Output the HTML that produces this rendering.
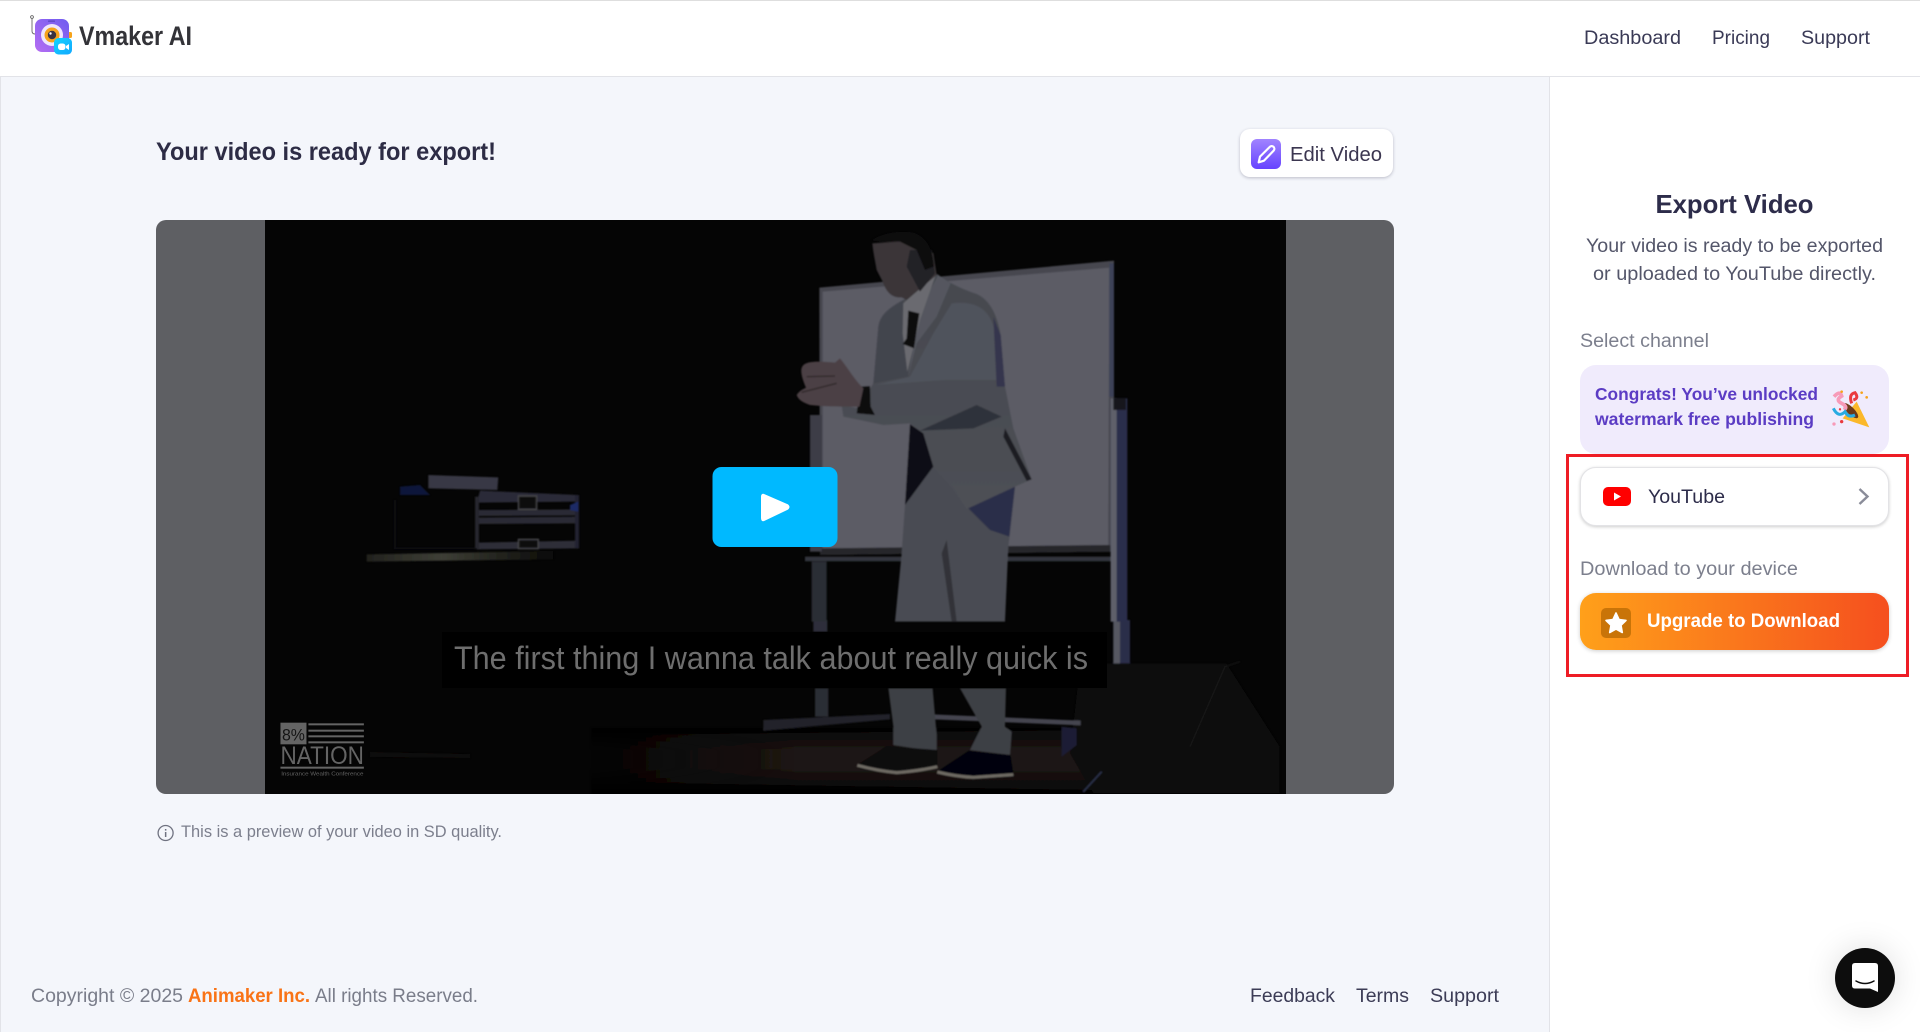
<!DOCTYPE html>
<html lang="en">
<head>
<meta charset="utf-8">
<title>Vmaker AI - Export Video</title>
<style>
html,body{margin:0;padding:0;width:1920px;height:1032px;overflow:hidden;background:#fff;font-family:"Liberation Sans",sans-serif}
.abs{position:absolute;box-sizing:border-box}
#top{left:0;top:0;width:1920px;height:77px;background:#fff;border-top:1px solid #dedede;border-bottom:1px solid #e2e3e8}
#main{left:0;top:77px;width:1549px;height:955px;background:#f4f6fb;border-left:1px solid #e2e3e8}
#side{left:1549px;top:77px;width:371px;height:955px;background:#fff;border-left:1px solid #e2e3e8}
#edit{left:1240px;top:129px;width:153px;height:48px;background:#fff;border-radius:10px;box-shadow:0 1px 3px rgba(40,40,70,.28)}
#video{left:156px;top:220px;width:1238px;height:574px;background:#5e5f63;border-radius:10px;overflow:hidden}
#congrats{left:1580px;top:365px;width:309px;height:89px;background:#f0ebfc;border-radius:16px}
#red{left:1566px;top:454px;width:343px;height:223px;border:3px solid #ee1c25}
#yt{left:1580px;top:467px;width:309px;height:59px;background:#fff;border:1px solid #e3e3e6;border-radius:16px;box-shadow:0 1px 3px rgba(0,0,0,.2)}
#up{left:1580px;top:593px;width:309px;height:57px;border-radius:16px;background:linear-gradient(90deg,#ffa01a,#f54f1e);box-shadow:0 1px 4px rgba(0,0,0,.2)}
#chat{left:1835px;top:948px;width:60px;height:60px;border-radius:50%;background:#0d0d0d;box-shadow:0 0 32px rgba(0,0,0,.13)}
svg{position:absolute;left:0;top:0}
text{font-family:"Liberation Sans",sans-serif}
</style>
</head>
<body>
<div class="abs" id="top"></div>
<div class="abs" id="main"></div>
<div class="abs" id="side"></div>
<div class="abs" id="edit"></div>
<div class="abs" id="video">
<svg width="1238" height="574" viewBox="156 220 1238 574">
<defs>
<linearGradient id="fl" gradientUnits="userSpaceOnUse" x1="591" y1="0" x2="800" y2="0"><stop offset="0" stop-color="#1c1413" stop-opacity="0"/><stop offset="1" stop-color="#1c1413"/></linearGradient>
<linearGradient id="fb" x1="0" y1="0" x2="0" y2="1"><stop offset="0" stop-color="#050505" stop-opacity="0"/><stop offset="1" stop-color="#050505"/></linearGradient>
<linearGradient id="ft" x1="0" y1="0" x2="0" y2="1"><stop offset="0" stop-color="#050505"/><stop offset="1" stop-color="#050505" stop-opacity="0"/></linearGradient>
<linearGradient id="lt" x1="0" y1="0" x2="1" y2="0"><stop offset="0" stop-color="#22221e"/><stop offset=".4" stop-color="#3e3f36"/><stop offset="1" stop-color="#0a0a08"/></linearGradient>
<linearGradient id="jk" x1="0" y1="0" x2="0" y2="1"><stop offset="0" stop-color="#45484f"/><stop offset="1" stop-color="#4d4f54"/></linearGradient>
<filter id="soft"><feGaussianBlur stdDeviation=".8"/></filter>
</defs>
<rect x="265" y="220" width="1021" height="574" fill="#050505"/>
<g filter="url(#soft)">
<!-- floor -->
<polygon points="591,735 1100,730 1095,790 591,782" fill="url(#fl)"/>
<rect x="591" y="728" width="510" height="22" fill="url(#ft)"/>
<rect x="591" y="768" width="510" height="26" fill="url(#fb)"/>
<polygon points="370,752 470,754 470,758 370,757" fill="#0f0a09"/>
<g transform="translate(760 620) scale(.33333)">
<polygon points="960,130 1400,130 1560,380 1560,520 1000,520 930,400" fill="#070707"/>
<path d="M1290 380 L1395 140 L1440 125" stroke="#1a1a1a" stroke-width="3" fill="none"/>
<path d="M970 515 L1025 455" stroke="#2c3048" stroke-width="5"/>
<!-- stand bottoms -->
<rect x="165" y="205" width="40" height="85" fill="#2c2d36"/>
<polygon points="10,300 390,282 390,298 10,332" fill="#22232c"/>
<polygon points="520,283 962,302 962,316 520,298" fill="#44454f"/>
<rect x="1060" y="0" width="50" height="130" fill="#2a2d4a"/>
<rect x="1060" y="0" width="20" height="130" fill="#565862"/>
<rect x="160" y="0" width="42" height="35" fill="#2e2f3a"/>
<polygon points="905,320 950,325 950,375 905,410" fill="#1c1e34"/>
</g>
<!-- whiteboard & person -->
<g transform="translate(760 220) scale(.33333)">
<polygon points="178,203 1062,122 1062,530 1055,995 180,1005" fill="#46474f"/>
<polygon points="188,215 1048,143 1045,980 188,985" fill="#5b5b65"/>
<rect x="1048" y="130" width="14" height="400" fill="#3d4258"/>
<polygon points="180,985 1050,975 1055,995 180,1005" fill="#25252b"/>
<rect x="135" y="1010" width="925" height="14" fill="#33343c"/>
<rect x="150" y="585" width="35" height="410" fill="#3c3d47"/>
<rect x="155" y="1025" width="45" height="180" fill="#2c2d36"/>
<rect x="1052" y="535" width="50" height="670" fill="#2a2e4c"/>
<rect x="1052" y="535" width="18" height="670" fill="#5e606a"/>
<rect x="1060" y="535" width="38" height="35" fill="#15161e"/>
<!-- pants -->
<path d="M435 855 L520 740 L575 800 L620 865 L765 800 L745 980 L735 1205 L405 1205 L425 1000 Z" fill="#484b52"/>
<path d="M625 865 L765 800 L748 950 L690 930 Z" fill="#2c2e48"/>
<path d="M560 960 L590 1205 L575 1205 L545 1000 Z" fill="#303238"/>
<!-- jacket -->
<path d="M532 162 C560 185 600 205 650 222 C690 240 712 285 722 345 L735 500 L760 625 L815 778 L765 800 L620 865 L575 800 L520 740 L490 640 L450 610 L370 615 L300 600 L250 590 L245 555 L295 565 L340 490 L355 320 C360 285 385 265 430 240 Z" fill="url(#jk)"/>
<path d="M355 320 C360 285 385 265 430 240 L445 470 L340 490 Z" fill="#42454d"/>
<path d="M575 250 C650 240 695 270 705 340 L712 480 L560 480 L345 495 L450 470 L520 340 Z" fill="#4f525b"/>
<path d="M700 290 L722 345 L735 500 L710 500 Z" fill="#35364e"/>
<path d="M480 632 L650 555 L725 590 L640 625 Z" fill="#2e303a"/>
<path d="M735 625 L815 778 L800 783 L730 650 Z" fill="#1b1b24"/>
<!-- dark hip -->
<path d="M450 612 L490 640 L520 740 L435 855 Z" fill="#0e0e14"/>
<!-- lapel -->
<path d="M445 470 L470 370 L530 290 L572 190 L535 165 L478 270 Z" fill="#54565f"/>
<!-- shirt -->
<path d="M430 250 L528 162 L480 300 L442 455 L428 340 Z" fill="#6a6b70"/>
<path d="M445 272 L478 280 L462 385 L428 372 L440 355 Z" fill="#070709"/>
<!-- cuff -->
<path d="M300 500 L330 498 L332 560 L345 585 L290 580 Z" fill="#0c0c10"/>
<!-- hands -->
<path d="M110 525 C120 510 130 508 138 503 C128 480 118 450 128 438 C140 420 190 425 225 428 L240 415 C265 445 280 475 310 505 L298 560 C260 560 190 560 150 555 C130 548 115 540 110 525 Z" fill="#4c4144"/>
<path d="M125 517 L230 490 M140 470 L225 468" stroke="#2f2729" stroke-width="4" fill="none"/>
<!-- head -->
<path d="M337 70 C340 100 345 120 350 150 L368 185 C378 215 395 235 425 232 L440 240 L530 165 L520 100 L470 60 Z" fill="#3a3638"/>
<path d="M450 90 L515 90 L525 160 L480 215 L440 140 Z" fill="#222026"/>
<path d="M335 62 C360 40 420 30 460 38 C500 50 520 90 522 140 L495 150 L470 90 L420 65 L370 65 Z" fill="#0b0a0d"/>
</g>
<g transform="translate(760 620) scale(.33333)">
<polygon points="385,205 518,205 530,345 530,395 400,375 400,320" fill="#3d4045"/>
<polygon points="600,205 738,205 735,320 755,335 750,405 630,390 665,320" fill="#3d4045"/>
<polygon points="290,435 380,378 532,390 532,440 410,462 300,447" fill="#07070c"/>
<path d="M292 436 Q350 452 410 458 Q480 452 532 440" fill="none" stroke="#6e6a64" stroke-width="9"/>
<polygon points="530,455 625,392 752,405 762,470 640,478" fill="#06060c"/>
<path d="M532 456 Q590 470 640 472 L760 464" fill="none" stroke="#6e6a64" stroke-width="9"/>
</g>
<!-- cases -->
<g transform="translate(260 220) scale(.33333)">
<polygon points="505,765 715,772 712,810 505,805" fill="#383844"/>
<polygon points="660,812 955,825 955,845 650,848" fill="#2b2b38"/>
<polygon points="645,870 955,868 955,886 650,888" fill="#2c2c36"/>
<polygon points="650,893 955,890 955,910 650,912" fill="#2a2a34"/>
<polygon points="650,968 955,962 955,985 650,988" fill="#2e2e38"/>
<rect x="645" y="830" width="12" height="155" fill="#26262e"/>
<rect x="945" y="825" width="12" height="160" fill="#232333"/>
<polygon points="930,855 955,845 955,875 930,870" fill="#1e2c66"/>
<polygon points="420,800 480,795 510,825 420,825" fill="#10143a"/>
<rect x="775" y="828" width="55" height="40" fill="#111" stroke="#46464c" stroke-width="4"/>
<rect x="775" y="958" width="60" height="28" fill="#111" stroke="#46464c" stroke-width="4"/>
<path d="M405 840 V985 H645" fill="none" stroke="#0f0f12" stroke-width="5"/>
<polygon points="320,1003 880,993 880,1018 320,1025" fill="url(#lt)"/>
</g>
</g>
<!-- 8% nation logo -->
<g transform="translate(140 620) scale(.3827 .33333)" fill="#646464">
<rect x="367" y="308" width="68" height="65"/>
<text x="371" y="362" font-size="50" fill="#141414" textLength="60" lengthAdjust="spacingAndGlyphs">8%</text>
<rect x="440" y="310" width="145" height="6"/><rect x="440" y="329" width="145" height="6"/><rect x="440" y="346" width="145" height="6"/><rect x="440" y="364" width="145" height="6"/>
<text x="367" y="432" font-size="76" textLength="218" lengthAdjust="spacingAndGlyphs">NATION</text>
<rect x="367" y="440" width="218" height="6"/>
<text x="369" y="467" font-size="16" textLength="215" lengthAdjust="spacingAndGlyphs">Insurance Wealth Conference</text>
</g>
<!-- subtitle -->
<rect x="442" y="632" width="665" height="56" fill="#000"/>
<text x="454" y="669" font-size="32" fill="#6e6e6e" textLength="634" lengthAdjust="spacingAndGlyphs">The first thing I wanna talk about really quick is</text>
<!-- play -->
<rect x="712.5" y="467" width="125" height="80" rx="9" fill="#00b9ff"/>
<path d="M764 495 L787 505 Q790 507 787 509 L764 520 Q762 521 762 518 V497 Q762 494 764 495 Z" fill="#fff" stroke="#fff" stroke-width="2" stroke-linejoin="round"/>
</svg>
</div>
<div class="abs" id="congrats"></div>
<div class="abs" id="red"></div>
<div class="abs" id="yt"></div>
<div class="abs" id="up"></div>
<div class="abs" id="chat"></div>
<svg width="1920" height="1032" viewBox="0 0 1920 1032">
<defs>
<linearGradient id="lg" x1="0" y1="1" x2="1" y2="0"><stop offset="0" stop-color="#b56df2"/><stop offset="1" stop-color="#6f5cf0"/></linearGradient>
<linearGradient id="pg" x1="0" y1="0" x2="0" y2="1"><stop offset="0" stop-color="#a184ff"/><stop offset="1" stop-color="#6643ff"/></linearGradient>
<linearGradient id="cg" x1="0" y1="0" x2="1" y2="1"><stop offset="0" stop-color="#12d4ff"/><stop offset="1" stop-color="#12a8ff"/></linearGradient>
</defs>
<!-- logo -->
<circle cx="32" cy="17" r="1.4" fill="none" stroke="#555" stroke-width=".8"/>
<path d="M32 18.5 V31 Q32 34 35 34" fill="none" stroke="#666" stroke-width=".9"/>
<rect x="68" y="32" width="4" height="6" rx="1.5" fill="#f6a31b"/>
<rect x="35" y="19" width="34" height="33" rx="7" fill="url(#lg)"/>
<circle cx="52" cy="35" r="11" fill="#efe6fd"/>
<circle cx="52" cy="35" r="7.5" fill="#f6a31b"/>
<circle cx="52" cy="35" r="4.2" fill="#3a3340"/>
<circle cx="50.5" cy="33.5" r="1.2" fill="#fff"/>
<rect x="48" y="20.5" width="7" height="1.3" rx=".6" fill="#5a44c0"/>
<rect x="54" y="38" width="18" height="16.5" rx="4.5" fill="url(#cg)"/>
<rect x="58" y="43.5" width="7.5" height="6.5" rx="2.6" fill="#fff"/>
<path d="M66 46 L69 44 V50 L66 48 Z" fill="#fff"/>
<text x="79" y="45" font-size="27" font-weight="700" fill="#333338" textLength="113" lengthAdjust="spacingAndGlyphs">Vmaker AI</text>
<!-- nav -->
<g font-size="19" fill="#3a3a56">
<text x="1584" y="44" textLength="97" lengthAdjust="spacingAndGlyphs">Dashboard</text>
<text x="1712" y="44" textLength="58" lengthAdjust="spacingAndGlyphs">Pricing</text>
<text x="1801" y="44" textLength="69" lengthAdjust="spacingAndGlyphs">Support</text>
</g>
<!-- title -->
<text x="156" y="160" font-size="25" font-weight="700" fill="#2d2c45" textLength="340" lengthAdjust="spacingAndGlyphs">Your video is ready for export!</text>
<!-- edit -->
<rect x="1251" y="139" width="30" height="30" rx="6" fill="url(#pg)"/>
<g transform="translate(1200 110) scale(.33333)"><path d="M176 157 L180 140 L209 111 A8 8 0 0 1 221 122 L192 152 Z" fill="none" stroke="#fff" stroke-width="6.5" stroke-linejoin="round"/></g>
<text x="1290" y="161" font-size="20" fill="#3b3650" textLength="92" lengthAdjust="spacingAndGlyphs">Edit Video</text>
<!-- info -->
<circle cx="165.6" cy="833" r="7.5" fill="none" stroke="#6f7280" stroke-width="1.3"/>
<rect x="164.9" y="832" width="1.5" height="5" fill="#6f7280"/><rect x="164.9" y="829" width="1.5" height="1.6" fill="#6f7280"/>
<text x="181" y="837" font-size="16.5" fill="#7c7f8d" textLength="321" lengthAdjust="spacingAndGlyphs">This is a preview of your video in SD quality.</text>
<!-- footer -->
<g font-size="19" fill="#7a7d8a">
<text x="31" y="1002" textLength="152" lengthAdjust="spacingAndGlyphs">Copyright © 2025</text>
<text x="188" y="1002" font-weight="700" fill="#f97316" textLength="122" lengthAdjust="spacingAndGlyphs">Animaker Inc.</text>
<text x="315" y="1002" textLength="163" lengthAdjust="spacingAndGlyphs">All rights Reserved.</text>
</g>
<g font-size="19" fill="#3c3c56">
<text x="1250" y="1002" textLength="85" lengthAdjust="spacingAndGlyphs">Feedback</text>
<text x="1356" y="1002" textLength="53" lengthAdjust="spacingAndGlyphs">Terms</text>
<text x="1430" y="1002" textLength="69" lengthAdjust="spacingAndGlyphs">Support</text>
</g>
<!-- side -->
<text x="1655.5" y="213" font-size="26" font-weight="700" fill="#2d2c4a" textLength="158" lengthAdjust="spacingAndGlyphs">Export Video</text>
<g font-size="19" fill="#54566a">
<text x="1586" y="252" textLength="297" lengthAdjust="spacingAndGlyphs">Your video is ready to be exported</text>
<text x="1593" y="280" textLength="283" lengthAdjust="spacingAndGlyphs">or uploaded to YouTube directly.</text>
</g>
<g font-size="19" fill="#7c7f8d">
<text x="1580" y="347" textLength="129" lengthAdjust="spacingAndGlyphs">Select channel</text>
<text x="1580" y="575" textLength="218" lengthAdjust="spacingAndGlyphs">Download to your device</text>
</g>
<g font-size="17.5" font-weight="700" fill="#5b3cc4">
<text x="1595" y="400" textLength="223" lengthAdjust="spacingAndGlyphs">Congrats! You’ve unlocked</text>
<text x="1595" y="425" textLength="219" lengthAdjust="spacingAndGlyphs">watermark free publishing</text>
</g>
<!-- popper -->
<g transform="translate(1540 170) scale(.33333)">
<polygon points="908,745 950,695 988,772" fill="#fbb82a"/>
<ellipse cx="932" cy="722" rx="11" ry="30" transform="rotate(-45 932 722)" fill="#6b3a1a"/>
<path d="M882 680 Q900 660 905 678 Q885 690 905 700 Q925 710 912 720" fill="none" stroke="#f79ab8" stroke-width="11"/>
<path d="M935 700 Q925 672 945 668 Q958 685 940 690" fill="none" stroke="#ea3a3f" stroke-width="9"/>
<path d="M880 715 Q895 745 915 725 Q925 745 945 735" fill="none" stroke="#29abe2" stroke-width="9"/>
<circle cx="905" cy="665" r="4" fill="#f6a31b"/><circle cx="980" cy="682" r="4" fill="#f6a31b"/><circle cx="965" cy="668" r="4" fill="#f6a31b"/><circle cx="905" cy="755" r="5" fill="#ea3a3f"/><circle cx="882" cy="762" r="5" fill="#f79ab8"/><circle cx="900" cy="718" r="3.5" fill="#ea3a3f"/>
</g>
<!-- youtube -->
<rect x="1603" y="487" width="28" height="19" rx="5" fill="#f00"/>
<path d="M1614 492.5 L1621 496.5 L1614 500.5 Z" fill="#fff"/>
<text x="1648" y="503" font-size="19" fill="#2d2c4a" textLength="77" lengthAdjust="spacingAndGlyphs">YouTube</text>
<path d="M1859.5 489 L1867.5 496.5 L1859.5 504" fill="none" stroke="#8a8c99" stroke-width="2.4"/>
<!-- upgrade -->
<rect x="1601" y="608" width="30" height="30" rx="5" fill="#c97408"/>
<path d="M1616 613 L1619 619.5 L1626 620.4 L1621 625.3 L1622.3 632.5 L1616 629 L1609.7 632.5 L1611 625.3 L1606 620.4 L1613 619.5 Z" fill="#fff" stroke="#fff" stroke-width="1.6" stroke-linejoin="round"/>
<text x="1647" y="627" font-size="19" font-weight="700" fill="#fff" textLength="193" lengthAdjust="spacingAndGlyphs">Upgrade to Download</text>
<!-- chat -->
<path d="M1855 963 H1875 Q1878 963 1878 966 V992 L1870 988.5 H1855 Q1852 988.5 1852 985.5 V966 Q1852 963 1855 963 Z" fill="#fff"/>
<path d="M1856 981 Q1865 986 1874 981" fill="none" stroke="#0d0d0d" stroke-width="1.5" stroke-linecap="round"/>
</svg>
</body>
</html>
